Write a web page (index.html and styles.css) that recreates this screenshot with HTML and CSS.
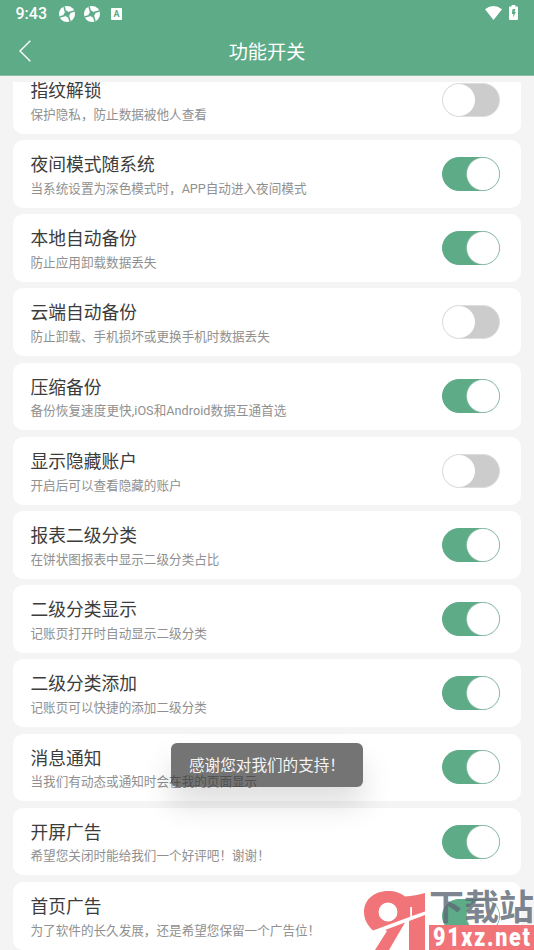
FILE: index.html
```html
<!DOCTYPE html>
<html lang="zh-CN">
<head>
<meta charset="utf-8">
<title>功能开关</title>
<link rel="stylesheet" href="styles.css">
</head>
<body>
<div class="screen">
  <header class="header">
    <div class="status">
      <span class="time">9:43</span>
      <svg class="ball" viewBox="0 0 16 16"><circle cx="8" cy="8" r="8" fill="#fff"/><path d="M7.4 4.4 11.6 7.4 8.6 11.6 4.4 8.6Z" fill="#5eab88"/><path d="M6.5 6 5 .5M10 6.5 15.5 5M9.5 10 11 15.5M6 9.5.5 11" stroke="#5eab88" stroke-width="1.5"/></svg>
      <svg class="ball" viewBox="0 0 16 16"><circle cx="8" cy="8" r="8" fill="#fff"/><path d="M7.4 4.4 11.6 7.4 8.6 11.6 4.4 8.6Z" fill="#5eab88"/><path d="M6.5 6 5 .5M10 6.5 15.5 5M9.5 10 11 15.5M6 9.5.5 11" stroke="#5eab88" stroke-width="1.5"/></svg>
      <span class="badge">A</span>
      <span class="grow"></span>
      <svg class="wifi" viewBox="0 0 17 14"><path d="M0 3.2Q8.5-3 17 3.2L8.5 14Z" fill="#fff"/></svg>
      <svg class="battery" viewBox="0 0 9 15"><path d="M2.6 0H6.4V1.5H8.2Q9 1.5 9 2.4V14Q9 15 8 15H1Q0 15 0 14V2.4Q0 1.5.8 1.5H2.6Z" fill="#fff"/><path d="M3.6 4H6.4L5.6 7H7L4 12.5 4.4 9H2.8Z" fill="#5eab88"/></svg>
    </div>
    <div class="bar">
      <svg class="back" viewBox="0 0 12 22"><path d="M11.3.8 1 11 11.3 21.2" fill="none" stroke="#fff" stroke-width="1.4"/></svg>
      <h1>功能开关</h1>
    </div>
  </header>
  <main class="viewport">
    <div class="list">
      <section class="card"><div><h2>指纹解锁</h2><p>保护隐私，防止数据被他人查看</p></div><i class="switch"></i></section>
      <section class="card"><div><h2>夜间模式随系统</h2><p>当系统设置为深色模式时，APP自动进入夜间模式</p></div><i class="switch on"></i></section>
      <section class="card"><div><h2>本地自动备份</h2><p>防止应用卸载数据丢失</p></div><i class="switch on"></i></section>
      <section class="card"><div><h2>云端自动备份</h2><p>防止卸载、手机损坏或更换手机时数据丢失</p></div><i class="switch"></i></section>
      <section class="card"><div><h2>压缩备份</h2><p class="mixed">备份恢复速度更快,iOS和Android数据互通首选</p></div><i class="switch on"></i></section>
      <section class="card"><div><h2>显示隐藏账户</h2><p>开启后可以查看隐藏的账户</p></div><i class="switch"></i></section>
      <section class="card"><div><h2>报表二级分类</h2><p>在饼状图报表中显示二级分类占比</p></div><i class="switch on"></i></section>
      <section class="card"><div><h2>二级分类显示</h2><p>记账页打开时自动显示二级分类</p></div><i class="switch on"></i></section>
      <section class="card"><div><h2>二级分类添加</h2><p>记账页可以快捷的添加二级分类</p></div><i class="switch on"></i></section>
      <section class="card"><div><h2>消息通知</h2><p>当我们有动态或通知时会在我的页面显示</p></div><i class="switch on"></i></section>
      <section class="card"><div><h2>开屏广告</h2><p>希望您关闭时能给我们一个好评吧！谢谢！</p></div><i class="switch on"></i></section>
      <section class="card"><div><h2>首页广告</h2><p>为了软件的长久发展，还是希望您保留一个广告位！</p></div><i class="switch on"></i></section>
    </div>
  </main>
  <div class="toast">感谢您对我们的支持！</div>
  <div class="watermark">
    <svg class="mark" viewBox="0 0 63 59">
      <g fill="#f17478">
        <path fill-rule="evenodd" d="M9 39.5C3 34 0 28 0 21 0 9 10 0 24 0 31 0 37 2 41 5.5 48 5 55 4 61 2V20.5L48 25V16H46.2V25.8ZM24 11.5A9.5 9.5 0 1 0 24 30.5 9.5 9.5 0 1 0 24 11.5Z"/>
        <path d="M21 39 41 31.5 25 59H11L23 40Z"/>
        <path d="M45 30 61 24V59H45Z"/>
      </g>
    </svg>
    <div class="site">
      <div class="site-name">下载站</div>
      <div class="site-url"><span>91xz.net</span></div>
    </div>
  </div>
</div>
</body>
</html>
```
FILE: styles.css
```css
* { box-sizing: border-box; }
body { margin: 0; font-family: Roboto, "Noto Sans CJK SC", sans-serif; }
h1, h2, p { margin: 0; font-weight: 400; white-space: nowrap; }
.screen { position: relative; width: 534px; height: 950px; overflow: hidden; background: #f4f4f4; display: flex; flex-direction: column; }
.header { height: 76px; flex: none; background: #5eab88; color: #fff; border-bottom: 1px solid #8abfa6; }
.status { height: 27px; display: flex; align-items: center; padding: 0 16px 0 15.5px; }
.time { font-size: 16px; font-weight: 500; width: 43.5px; }
.ball { width: 16px; height: 16px; margin-right: 9px; }
.badge { width: 11px; height: 12px; margin-left: 2px; background: #fff; color: #5eab88; border-radius: 1px; font: 700 9px/12px Roboto, sans-serif; text-align: center; }
.grow { flex: 1; }
.wifi { width: 17px; height: 14px; margin-right: 7px; margin-bottom: 2px; }
.battery { width: 9px; height: 15px; margin-bottom: 2px; }
.bar { display: grid; grid-template-columns: 32px 1fr 32px; align-items: center; height: 48px; }
.back { width: 12px; height: 22px; margin-left: 19px; }
h1 { text-align: center; font-size: 19.2px; line-height: 28px; padding-top: 3px; }
.viewport { flex: 1; min-height: 0; margin-top: 6px; overflow: hidden; }
.list { margin-top: -16.2px; padding: 0 13px; display: flex; flex-direction: column; gap: 6.4px; }
.card { height: 67.8px; flex: none; background: #fff; border-radius: 10px; padding: 0 20.8px 0 17.5px; display: flex; justify-content: space-between; align-items: center; }
h2 { font-size: 17.75px; line-height: 26px; color: #3c3c3c; padding-top: 2px; }
p { font-size: 12.6px; line-height: 18px; color: #909090; margin-top: 1.8px; }
.mixed { letter-spacing: .06px; }
.switch { width: 58px; height: 34px; border-radius: 17px; background: #ccc; border: 1px solid #ddd; display: flex; }
.switch::before { content: ""; width: 32px; height: 32px; border-radius: 50%; background: #fff; }
.switch.on { background: #5eab88; border-color: #5eab88; justify-content: flex-end; }
.switch.on::before { box-shadow: 0 0 1px .5px #c4d4cc; }
.toast { position: absolute; left: 171px; top: 743px; width: 192px; height: 44px; padding-left: 18px; border-radius: 6px; background: rgba(50, 50, 50, .68); color: #f4f4f4; font-size: 15.6px; line-height: 47px; white-space: nowrap; box-shadow: 0 18px 30px rgba(0, 0, 0, .13); }
.watermark { position: absolute; left: 364px; top: 891px; width: 170px; height: 59px; display: flex; }
.mark { width: 63px; height: 59px; flex: none; }
.site { margin-left: 2px; width: 105px; }
.site-name { height: 34px; font-size: 35px; line-height: 36px; font-weight: 700; color: rgba(96, 107, 119, .82); white-space: nowrap; }
.site-url { height: 25px; padding-left: 4px; background: #f17478; color: #fff; font: 900 25px/25px Roboto, sans-serif; white-space: nowrap; }
.site-url span { display: inline-block; letter-spacing: 2px; transform: scaleX(.86); transform-origin: left; }
```
